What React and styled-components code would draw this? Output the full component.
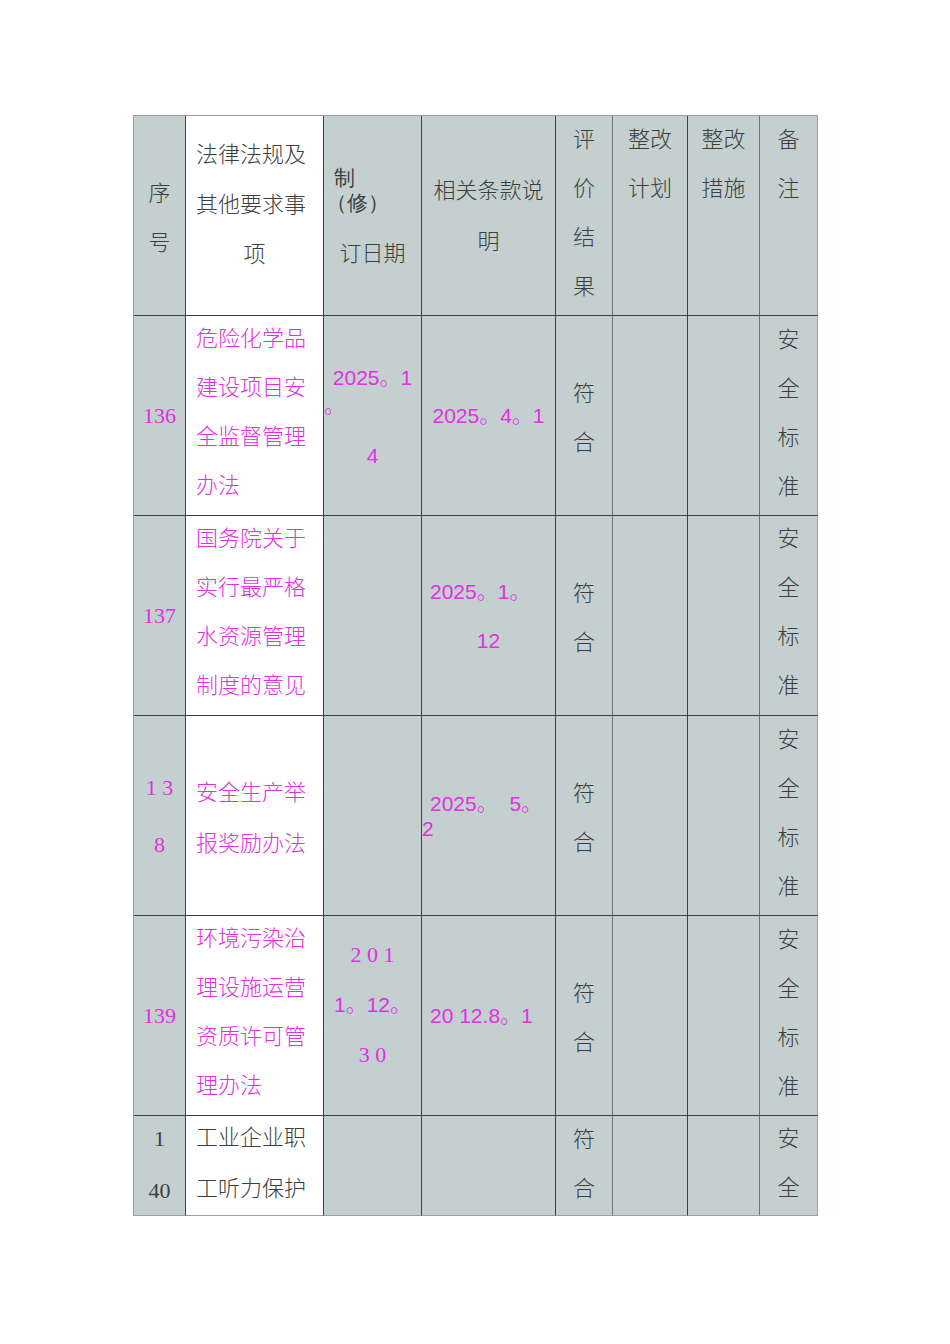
import React from 'react';
import styled, {createGlobalStyle} from 'styled-components';

const GlobalStyle = createGlobalStyle`
  body {
    margin: 0;
    background: #ffffff;
  }
`;

const DARK = '#3c4343';
const MID = '#6b7675';
const LIGHT = '#9aa0a0';

const fonts = {
  cjk: `"Noto Sans CJK SC", sans-serif`,
  serif: `"Liberation Serif", "Noto Sans CJK SC", serif`,
  sans: `"Liberation Sans", "Noto Sans CJK SC", sans-serif`
};

const sizes = {cjk: '22px', serif: '22px', sans: '21px', small: '21px'};

const Page = styled.div`
  box-sizing: border-box;
  height: 1344px;
  padding: 115px 0 0 133px;
  overflow: hidden;
`;

const Table = styled.div`
  display: grid;
  grid-template-columns: 52px 138px 98px 134px 57px 75px 72px 58px;
  width: max-content;
  border-top: 1px solid ${LIGHT};
  border-left: 1px solid ${LIGHT};
`;

const Cell = styled.div`
  box-sizing: border-box;
  height: ${p => p.$h}px;
  display: flex;
  flex-direction: column;
  justify-content: ${p => (p.$v === 'middle' ? 'center' : 'flex-start')};
  background: ${p => (p.$white ? '#ffffff' : '#c3d0cf')};
  border-right: 1px solid ${p => p.$edge};
  border-bottom: 1px solid ${p => (p.$last ? LIGHT : DARK)};
  overflow: hidden;

  & > :first-child {
    margin-top: ${p => p.$pt || 0}px;
  }
`;

const Line = styled.span`
  display: block;
  white-space: pre;
  line-height: ${p => p.$lh || 49}px;
  margin-top: ${p => p.$mt || 0}px;
  padding-left: ${p => p.$pl || 0}px;
  text-align: ${p => p.$align || 'center'};
  font-family: ${p => fonts[p.$font || 'cjk']};
  font-size: ${p => sizes[p.$font || 'cjk']};
  font-weight: 300;
  color: ${p => (p.$pink ? '#e22fe2' : '#3d3f3f')};
`;

const edges = [DARK, DARK, DARK, DARK, MID, DARK, MID, LIGHT];

const c = (lines, opts = {}) => ({lines, ...opts});
const L = (t, opts = {}) => ({t, ...opts});
const chars = (s, opts = {}) => s.split('').map(t => L(t, opts));

const law = (rows, pink = true, pt = -4) =>
  c(rows.map(t => L(t, {align: 'left', pl: 10, pink})), {white: true, pt});

const rows = [
  {
    h: 200,
    cells: [
      c(chars('序号'), {v: 'middle'}),
      c(
        [
          L('法律法规及', {lh: 50, align: 'left', pl: 10}),
          L('其他要求事', {lh: 50, align: 'left', pl: 10}),
          L('项', {lh: 50})
        ],
        {white: true, pt: 11}
      ),
      c(
        [
          L('制', {lh: 25, align: 'left', pl: 10, font: 'small'}),
          L('（修）', {lh: 25, align: 'left', pl: 2, font: 'small'}),
          L('订日期', {lh: 50, mt: 10})
        ],
        {pt: 50}
      ),
      c([L('相关条款说', {lh: 51}), L('明', {lh: 51})], {pt: 47}),
      c(chars('评价结果'), {pt: -3}),
      c([L('整改'), L('计划')], {pt: -3}),
      c([L('整改'), L('措施')], {pt: -3}),
      c(chars('备注'), {pt: -3})
    ]
  },
  {
    h: 200,
    cells: [
      c([L('136', {font: 'serif', pink: true})], {v: 'middle'}),
      law(['危险化学品', '建设项目安', '全监督管理', '办法']),
      c(
        [
          L('2025。1', {font: 'sans', pink: true, lh: 34}),
          L('。', {font: 'sans', pink: true, lh: 22, align: 'left'}),
          L('4', {font: 'sans', pink: true, mt: 14})
        ],
        {pt: 45}
      ),
      c([L('2025。4。1', {font: 'sans', pink: true})], {v: 'middle'}),
      c(chars('符合'), {v: 'middle'}),
      c([]),
      c([]),
      c(chars('安全标准'), {pt: -3})
    ]
  },
  {
    h: 200,
    cells: [
      c([L('137', {font: 'serif', pink: true})], {v: 'middle'}),
      law(['国务院关于', '实行最严格', '水资源管理', '制度的意见']),
      c([]),
      c(
        [
          L('2025。1。', {font: 'sans', pink: true, align: 'left', pl: 8}),
          L('12', {font: 'sans', pink: true})
        ],
        {v: 'middle'}
      ),
      c(chars('符合'), {v: 'middle'}),
      c([]),
      c([]),
      c(chars('安全标准'), {pt: -4})
    ]
  },
  {
    h: 200,
    cells: [
      c([L('1 3', {font: 'serif', pink: true, lh: 57}), L('8', {font: 'serif', pink: true, lh: 57})], {v: 'middle'}),
      c(
        ['安全生产举', '报奖励办法'].map(t => L(t, {align: 'left', pl: 10, pink: true, lh: 51})),
        {white: true, v: 'middle'}
      ),
      c([]),
      c(
        [
          L('2025。 \u00a05。', {font: 'sans', pink: true, align: 'left', pl: 8, lh: 25}),
          L('2', {font: 'sans', pink: true, align: 'left', lh: 25})
        ],
        {v: 'middle'}
      ),
      c(chars('符合'), {v: 'middle'}),
      c([]),
      c([]),
      c(chars('安全标准'), {pt: -3})
    ]
  },
  {
    h: 200,
    cells: [
      c([L('139', {font: 'serif', pink: true})], {v: 'middle'}),
      law(['环境污染治', '理设施运营', '资质许可管', '理办法']),
      c(
        [
          L('2 0 1', {font: 'serif', pink: true, lh: 50}),
          L('1。12。', {font: 'sans', pink: true, lh: 50}),
          L('3 0', {font: 'serif', pink: true, lh: 50})
        ],
        {pt: 14}
      ),
      c([L('20 12.8。1', {font: 'sans', pink: true, align: 'left', pl: 8})], {v: 'middle'}),
      c(chars('符合'), {v: 'middle'}),
      c([]),
      c([]),
      c(chars('安全标准'), {pt: -3})
    ]
  },
  {
    h: 100,
    last: true,
    cells: [
      c([L('1', {font: 'serif', lh: 52}), L('40', {font: 'serif', lh: 52})], {pt: -3}),
      c(
        ['工业企业职', '工听力保护'].map(t => L(t, {align: 'left', pl: 10, lh: 51})),
        {white: true, pt: -6}
      ),
      c([]),
      c([]),
      c(chars('符合'), {pt: -3}),
      c([]),
      c([]),
      c(chars('安全'), {pt: -4})
    ]
  }
];

export default function App() {
  return (
    <Page>
      <GlobalStyle />
      <Table>
        {rows.map((row, r) =>
          row.cells.map((cell, i) => (
            <Cell
              key={`${r}-${i}`}
              $h={row.h}
              $last={row.last}
              $edge={edges[i]}
              $v={cell.v}
              $pt={cell.pt}
              $white={cell.white}
            >
              {cell.lines.map((ln, j) => (
                <Line
                  key={j}
                  $lh={ln.lh}
                  $mt={ln.mt}
                  $pl={ln.pl}
                  $align={ln.align}
                  $font={ln.font}
                  $pink={ln.pink}
                >
                  {ln.t}
                </Line>
              ))}
            </Cell>
          ))
        )}
      </Table>
    </Page>
  );
}
